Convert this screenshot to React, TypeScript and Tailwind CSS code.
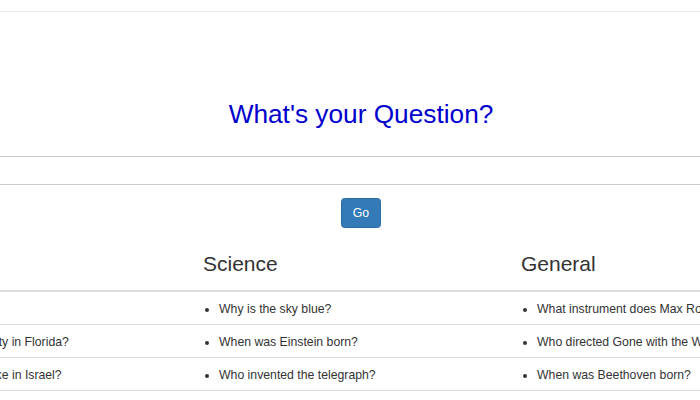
const columns = [
  {
    title: "Geography",
    items: [
      "Who is Bill Gates?",
      "What is the largest city in Florida?",
      "What's the largest lake in Israel?",
    ],
  },
  {
    title: "Science",
    items: [
      "Why is the sky blue?",
      "When was Einstein born?",
      "Who invented the telegraph?",
    ],
  },
  {
    title: "General",
    items: [
      "What instrument does Max Roach play?",
      "Who directed Gone with the Wind?",
      "When was Beethoven born?",
    ],
  },
];

export default function App() {
  return (
    <main className="flex h-[400px] w-[700px] flex-col overflow-hidden bg-white font-['Liberation_Sans',Arial,sans-serif] text-[#333]">
      <div className="h-[12px] shrink-0 border-b border-[#ececec] bg-white" />

      <h2 className="mt-[88px] pl-[22px] text-center text-[26.25px] leading-[29px] text-[#0000cd]">
        What's your Question?
      </h2>

      <input
        type="text"
        className="mt-[27px] h-[29px] w-full shrink-0 border-y border-[#cccccc] bg-white px-[10px] text-[12.25px] outline-none"
      />

      <div className="mt-[13px] flex justify-center pl-[22px]">
        <button className="h-[30px] rounded-[3.5px] border border-[#2e6da4] bg-[#337ab7] px-[10.5px] text-[12.25px] leading-none text-white">
          Go
        </button>
      </div>

      <div className="mt-[12px] ml-[-139px] grid w-[970px] shrink-0 grid-cols-[334px_318px_318px]">
        {columns.map((col) => (
          <div key={col.title} className="flex flex-col">
            <div className="box-border flex h-[52px] items-end border-b-2 border-[#dddddd] px-[8px] pb-[15px]">
              <h3 className="text-[21px] leading-[23px] whitespace-nowrap">{col.title}</h3>
            </div>
            {col.items.map((item) => (
              <div
                key={item}
                className="box-border flex h-[33px] items-center border-b border-[#dddddd] pl-[7px] pt-[3px]"
              >
                <ul className="list-disc pl-[17px] text-[12.25px] leading-[17.5px] whitespace-nowrap">
                  <li>{item}</li>
                </ul>
              </div>
            ))}
          </div>
        ))}
      </div>
    </main>
  );
}
